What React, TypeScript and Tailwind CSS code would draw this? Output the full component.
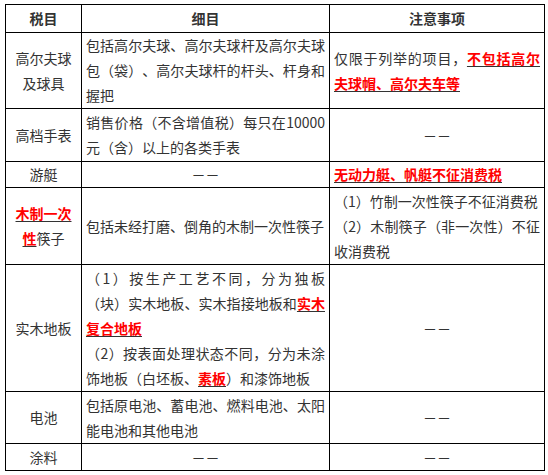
const DASH = "－－";

function Red({ children }: { children: React.ReactNode }) {
	return (
		<span className="underline decoration-[#333] underline-offset-2">
			<span className="font-bold text-[#ff0000]">{children}</span>
		</span>
	);
}

const cell = "border border-black px-[4px] py-0 align-middle";

export default function App() {
	return (
		<div className="bg-white w-[548px] h-[475px] pt-[4px] pl-[5px] text-[14px] leading-[25px] text-[#333] [text-spacing-trim:space-all] font-['Noto_Sans_CJK_SC','Noto_Sans',sans-serif]">
			<table className="border-collapse table-fixed w-[539px]">
				<colgroup>
					<col className="w-[76px]" />
					<col className="w-[248px]" />
					<col className="w-[215px]" />
				</colgroup>
				<tbody>
					<tr className="h-[28px]">
						<th className={`${cell} text-center font-bold`}>税目</th>
						<th className={`${cell} text-center font-bold`}>细目</th>
						<th className={`${cell} text-center font-bold`}>注意事项</th>
					</tr>
					<tr className="h-[76px]">
						<td className={`${cell} text-center`}>高尔夫球及球具</td>
						<td className={`${cell} text-justify`}>
							包括高尔夫球、高尔夫球杆及高尔夫球包（袋）、高尔夫球杆的杆头、杆身和握把
						</td>
						<td className={`${cell} text-justify`}>
							仅限于列举的项目，<Red>不包括高尔夫球帽、高尔夫车等</Red>
						</td>
					</tr>
					<tr className="h-[53px]">
						<td className={`${cell} text-center`}>高档手表</td>
						<td className={`${cell} text-justify`}>
							销售价格（不含增值税）每只在10000元（含）以上的各类手表
						</td>
						<td className={`${cell} text-center`}>{DASH}</td>
					</tr>
					<tr className="h-[26px]">
						<td className={`${cell} text-center`}>游艇</td>
						<td className={`${cell} text-center`}>{DASH}</td>
						<td className={cell}>
							<Red>无动力艇、帆艇不征消费税</Red>
						</td>
					</tr>
					<tr className="h-[77px]">
						<td className={`${cell} text-center`}>
							<Red>木制一次性</Red>筷子
						</td>
						<td className={cell}>包括未经打磨、倒角的木制一次性筷子</td>
						<td className={`${cell} text-justify`}>
							<p>（1）竹制一次性筷子不征消费税</p>
							<p>（2）木制筷子（非一次性）不征收消费税</p>
						</td>
					</tr>
					<tr className="h-[127px]">
						<td className={`${cell} text-center`}>实木地板</td>
						<td className={`${cell} text-justify`}>
							<p>
								（1）按生产工艺不同，分为独板（块）实木地板、实木指接地板和
								<Red>实木复合地板</Red>
							</p>
							<p>
								（2）按表面处理状态不同，分为未涂饰地板（白坯板、<Red>素板</Red>）和漆饰地板
							</p>
						</td>
						<td className={`${cell} text-center`}>{DASH}</td>
					</tr>
					<tr className="h-[52px]">
						<td className={`${cell} text-center`}>电池</td>
						<td className={`${cell} text-justify`}>
							包括原电池、蓄电池、燃料电池、太阳能电池和其他电池
						</td>
						<td className={`${cell} text-center`}>{DASH}</td>
					</tr>
					<tr className="h-[27px]">
						<td className={`${cell} text-center`}>涂料</td>
						<td className={`${cell} text-center`}>{DASH}</td>
						<td className={`${cell} text-center`}>{DASH}</td>
					</tr>
				</tbody>
			</table>
		</div>
	);
}
